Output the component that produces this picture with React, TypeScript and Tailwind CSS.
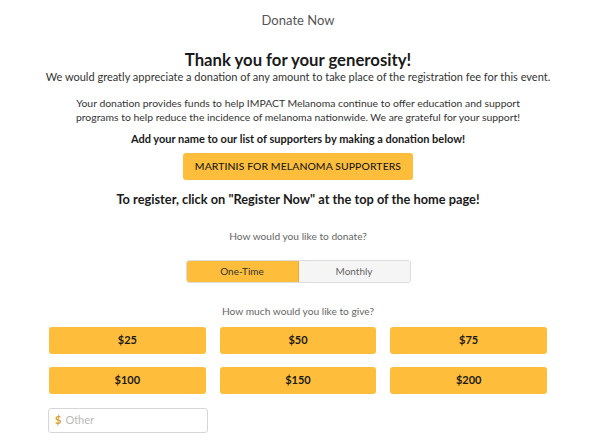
import { useState } from 'react';

const amounts = ['$25', '$50', '$75', '$100', '$150', '$200'];

export default function App() {
    const [frequency, setFrequency] = useState('one-time');
    const [amount, setAmount] = useState('');

    return (
        <div className="min-h-screen bg-white text-[#222] font-['Lato',sans-serif]">
            <div className="ml-[48px] w-[500px] flex flex-col items-center text-center">
                {/* Header */}
                <h2 className="mt-[12px] text-[13px] leading-[16px] text-[#555]">Donate Now</h2>

                {/* Intro */}
                <h1 className="mt-[22px] text-[16.7px] leading-[20px] font-bold text-[#1a1a1a]">Thank you for your generosity!</h1>
                <p className="mt-[0px] whitespace-nowrap text-[11px] leading-[14px] text-[#333]">
                    We would greatly appreciate a donation of any amount to take place of the registration fee for this event.
                </p>
                <p className="mt-[12px] w-[470px] text-[10.4px] leading-[14px] text-[#333]">
                    Your donation provides funds to help IMPACT Melanoma continue to offer education and support programs to help reduce the incidence of melanoma nationwide. We are grateful for your support!
                </p>
                <p className="mt-[8px] text-[11px] leading-[14px] font-bold text-[#1a1a1a]">
                    Add your name to our list of supporters by making a donation below!
                </p>
                <button className="mt-[7px] w-[230px] h-[27px] rounded-[3px] bg-[#FEBE3B] text-[10.4px] font-medium text-[#1a1a1a] tracking-[0.1px]">
                    MARTINIS FOR MELANOMA SUPPORTERS
                </button>
                <p className="mt-[11px] text-[12.8px] leading-[16px] font-bold text-[#1a1a1a]">
                    To register, click on "Register Now" at the top of the home page!
                </p>

                {/* Frequency */}
                <p className="mt-[22px] text-[10.2px] leading-[14px] text-[#666]">How would you like to donate?</p>
                <div className="mt-[17px] flex w-[225px] h-[23px] rounded-[3px] overflow-hidden border border-[#dcdcdc]">
                    <button
                        onClick={() => setFrequency('one-time')}
                        className={frequency === 'one-time'
                            ? 'flex-1 bg-[#FEBE3B] text-[10px] text-[#333] border-r border-[#e6ad30]'
                            : 'flex-1 bg-[#f5f5f5] text-[10px] text-[#666]'}
                    >
                        One-Time
                    </button>
                    <button
                        onClick={() => setFrequency('monthly')}
                        className={frequency === 'monthly'
                            ? 'flex-1 bg-[#FEBE3B] text-[10px] text-[#333]'
                            : 'flex-1 bg-[#f5f5f5] text-[10px] text-[#666]'}
                    >
                        Monthly
                    </button>
                </div>

                {/* Amount */}
                <p className="mt-[21px] text-[10.2px] leading-[14px] text-[#666]">How much would you like to give?</p>
                <div className="mt-[9px] w-full grid grid-cols-3 gap-x-[14px] gap-y-[13px] px-[1px]">
                    {amounts.map(a => (
                        <button
                            key={a}
                            onClick={() => setAmount(a)}
                            className="h-[27px] rounded-[3px] bg-[#FEBE3B] text-[11px] font-bold text-[#1a1a1a]"
                        >
                            {a}
                        </button>
                    ))}
                </div>
                <div className="mt-[14px] self-start flex items-center w-[160px] h-[25px] rounded-[3px] border border-[#d6d6d6] px-[6px]">
                    <span className="text-[11px] font-bold text-[#d9a12b]">$</span>
                    <input
                        value={amount}
                        onChange={e => setAmount(e.target.value)}
                        placeholder="Other"
                        className="ml-[4px] w-full text-[11px] outline-none placeholder:text-[#bbb]"
                    />
                </div>
            </div>
        </div>
    );
}
